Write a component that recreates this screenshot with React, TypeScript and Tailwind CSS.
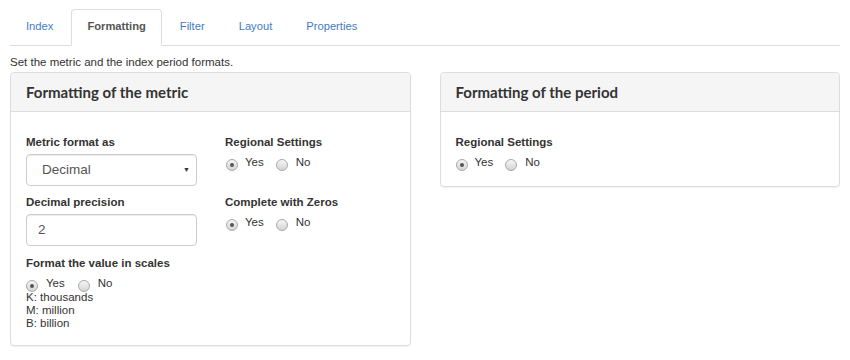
import React from "react";

const tabs = ["Index", "Formatting", "Filter", "Layout", "Properties"];

function Radio({ checked }: { checked?: boolean }) {
  return (
    <span className="mt-[4px] flex h-[12px] w-[12px] shrink-0 items-center justify-center rounded-full border border-[#a9a9a9] bg-gradient-to-b from-[#f6f6f6] to-[#d4d4d4]">
      {checked && <span className="h-[4px] w-[4px] rounded-full bg-[#555]" />}
    </span>
  );
}

function YesNo({ className = "" }: { className?: string }) {
  return (
    <div className={"flex items-start leading-[14px] " + className}>
      <Radio checked />
      <span className="ml-[7px]">Yes</span>
      <span className="ml-[12px] flex items-start">
        <Radio />
        <span className="ml-[8px]">No</span>
      </span>
    </div>
  );
}

function Label({ children, className = "" }: { children: React.ReactNode; className?: string }) {
  return <div className={"font-bold leading-[14px] " + className}>{children}</div>;
}

function Panel({ title, children }: { title: string; children: React.ReactNode }) {
  return (
    <div className="self-start rounded-[4px] border border-[#dddddd] bg-white shadow-[0_1px_1px_rgba(0,0,0,0.05)]">
      <div className="flex h-[39px] items-center rounded-t-[4px] border-b border-[#dddddd] bg-[#f5f5f5] px-[15px] font-['Lato',sans-serif] text-[15px] font-bold text-[#333]">
        {title}
      </div>
      <div className="px-[15px] pt-[23px] pb-[15px]">{children}</div>
    </div>
  );
}

export default function App() {
  return (
    <div className="min-h-[360px] bg-white px-[10px] pt-[9px] font-['Liberation_Sans',Arial,sans-serif] text-[11.5px] text-[#333]">
      {/* tabs */}
      <ul className="flex h-[37px] border-b border-[#dddddd] text-[11.2px]">
        {tabs.map((t) => {
          const active = t === "Formatting";
          return (
            <li
              key={t}
              className={
                active
                  ? "mr-[2px] flex h-[37px] items-center rounded-t-[4px] border border-[#dddddd] border-b-transparent bg-white px-[15px] pb-[2px] font-bold text-[#555]"
                  : "mr-[2px] flex h-[37px] items-center border border-transparent px-[15px] pb-[2px] text-[#3f7cc4]"
              }
            >
              {t}
            </li>
          );
        })}
      </ul>

      <p className="mt-[8px] leading-[17px]">Set the metric and the index period formats.</p>

      <div className="mt-[1px] grid grid-cols-2 gap-[29px]">
        <Panel title="Formatting of the metric">
          <div className="grid grid-cols-[171px_1fr] gap-x-[28px]">
            <div>
              <Label>Metric format as</Label>
              <div className="mt-[5px] flex h-[32px] items-center justify-between rounded-[4px] border border-[#cccccc] bg-white pl-[15px] pr-[6px] text-[13.5px] text-[#555] shadow-[inset_0_1px_1px_rgba(0,0,0,0.075)]">
                <span>Decimal</span>
                <span className="text-[7px] text-[#333]">▼</span>
              </div>
            </div>
            <div>
              <Label>Regional Settings</Label>
              <YesNo className="mt-[6px] ml-[1px]" />
            </div>

            <div className="mt-[9px]">
              <Label>Decimal precision</Label>
              <div className="mt-[5px] flex h-[32px] items-center rounded-[4px] border border-[#cccccc] bg-white px-[11px] text-[13.5px] text-[#555] shadow-[inset_0_1px_1px_rgba(0,0,0,0.075)]">
                2
              </div>
            </div>
            <div className="mt-[9px]">
              <Label>Complete with Zeros</Label>
              <YesNo className="mt-[6px] ml-[1px]" />
            </div>

            <div className="col-span-2 mt-[10px]">
              <Label>Format the value in scales</Label>
              <div className="mt-[6px] flex items-start leading-[14px]">
                <Radio checked />
                <span className="ml-[8px]">Yes</span>
                <span className="ml-[13px] flex items-start">
                  <Radio />
                  <span className="ml-[8px]">No</span>
                </span>
              </div>
              <div className="-mt-[1px] leading-[13px]">
                <div>K: thousands</div>
                <div>M: million</div>
                <div>B: billion</div>
              </div>
            </div>
          </div>
        </Panel>

        <Panel title="Formatting of the period">
          <Label>Regional Settings</Label>
          <YesNo className="mt-[6px]" />
        </Panel>
      </div>
    </div>
  );
}
